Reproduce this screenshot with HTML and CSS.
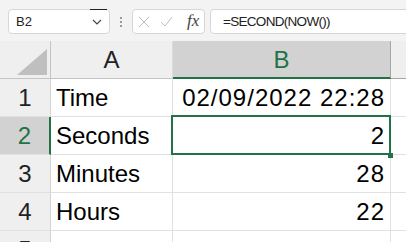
FILE: index.html
```html
<!DOCTYPE html>
<html lang="en">
<head>
  <meta charset="UTF-8" />
  <meta name="viewport" content="width=device-width, initial-scale=1.0"/>
  <title>SECOND(NOW())</title>
  <link rel="stylesheet" href="styles.css">
</head>
<body>
  <div class="toolbar">
    <div class="namebox">
      <span class="name">B2</span>
      <svg class="chevron" width="10" height="6" viewBox="0 0 10 6"><path d="M1 1 L5 5 L9 1" fill="none" stroke="#444" stroke-width="1.2"/></svg>
    </div>
    <div class="dots"><i></i><i></i><i></i></div>
    <div class="fxbtns">
      <svg class="btn" width="12" height="12" viewBox="0 0 12 12"><path d="M1 1 L11 11 M11 1 L1 11" stroke="#bdbdbd" stroke-width="1"/></svg>
      <svg class="btn" width="13" height="11" viewBox="0 0 13 11"><path d="M1 6 L5 10 L12 1" fill="none" stroke="#bdbdbd" stroke-width="1"/></svg>
      <span class="fx">fx</span>
    </div>
    <div class="formula">=SECOND(NOW())</div>
  </div>

  <div class="sheet">
    <div class="corner">
      <svg width="30" height="26" viewBox="0 0 30 26"><polygon points="0,26 30,26 30,0" fill="#bfbfbf"/></svg>
    </div>
    <div class="colhead">A</div>
    <div class="colhead sel">B</div>
    <div class="colhead rest"></div>

    <div class="rowhead">1</div>
    <div class="cell">Time</div>
    <div class="cell num">02/09/2022 22:28</div>
    <div class="cell rest"></div>

    <div class="rowhead sel">2</div>
    <div class="cell">Seconds</div>
    <div class="cell num active">2</div>
    <div class="cell rest"></div>

    <div class="rowhead">3</div>
    <div class="cell">Minutes</div>
    <div class="cell num">28</div>
    <div class="cell rest"></div>

    <div class="rowhead">4</div>
    <div class="cell">Hours</div>
    <div class="cell num">22</div>
    <div class="cell rest"></div>

    <div class="rowhead">5</div>
    <div class="cell"></div>
    <div class="cell num"></div>
    <div class="cell rest"></div>
  </div>
</body>
</html>
```

FILE: styles.css
```css
* {
  box-sizing: border-box;
}

body {
  margin: 0;
  background: #f3f3f3;
  font-family: "Liberation Sans", Arial, sans-serif;
  overflow: hidden;
  width: 406px;
  height: 242px;
}

/* formula bar */
.toolbar {
  display: flex;
  align-items: flex-start;
  height: 41px;
  padding: 9px 0 0 8px;
}

.namebox {
  position: relative;
  width: 102px;
  height: 25px;
  background: #fff;
  border: 1px solid #d6d6d6;
  border-radius: 4px;
  display: flex;
  align-items: center;
  justify-content: space-between;
  padding: 0 7px 0 7px;
}

.namebox::before {
  content: "";
  position: absolute;
  top: -1px;
  left: 81px;
  width: 17px;
  height: 1px;
  background: #222;
}

.name {
  font-size: 13px;
  color: #222;
}

.chevron {
  margin-top: 1px;
}

.dots {
  width: 22px;
  height: 25px;
  display: flex;
  flex-direction: column;
  align-items: center;
  justify-content: center;
  gap: 2px;
}

.dots i {
  width: 2px;
  height: 2px;
  background: #9a9a9a;
}

.fxbtns {
  width: 73px;
  height: 25px;
  background: #fff;
  border: 1px solid #d6d6d6;
  border-radius: 4px;
  display: flex;
  align-items: center;
  padding-left: 5px;
  gap: 10px;
}

.fx {
  font-family: "Liberation Serif", "Times New Roman", serif;
  font-style: italic;
  font-size: 17px;
  color: #444;
  margin-left: 4px;
  margin-top: -2px;
}

.formula {
  flex: 1;
  margin-left: 5px;
  margin-right: -10px;
  height: 25px;
  background: #fff;
  border: 1px solid #d6d6d6;
  border-radius: 4px;
  padding-left: 12px;
  font-size: 13.5px;
  letter-spacing: -0.7px;
  line-height: 23px;
  color: #222;
}

/* sheet grid */
.sheet {
  display: grid;
  grid-template-columns: 51px 122px 218px 1fr;
  grid-template-rows: 38px repeat(5, 38px);
  font-size: 24px;
}

.corner {
  background: #efefef;
  border-right: 1px solid #c4c4c4;
  border-bottom: 1px solid #c4c4c4;
  display: flex;
  align-items: flex-end;
  justify-content: flex-end;
  padding: 0 3px 3px 0;
}

.colhead {
  background: #efefef;
  border-right: 1px solid #dcdcdc;
  border-bottom: 1px solid #c4c4c4;
  display: flex;
  align-items: flex-end;
  justify-content: center;
  padding-bottom: 4px;
  line-height: 28px;
  color: #222;
}

.colhead.sel {
  background: #d2d2d2;
  color: #217346;
  border-right: 1px solid #a6a6a6;
  border-bottom: 2px solid #217346;
  padding-bottom: 3px;
}

.colhead.rest {
  border-right: none;
  border-bottom-color: #a6a6a6;
}

.rowhead {
  background: #efefef;
  border-right: 1px solid #d4d4d4;
  border-bottom: 1px solid #e1e1e1;
  display: flex;
  align-items: flex-end;
  justify-content: center;
  padding-bottom: 4px;
  line-height: 28px;
  color: #222;
}

.rowhead.sel {
  background: #d2d2d2;
  color: #217346;
  border-right: 2px solid #217346;
}

.cell {
  background: #fff;
  border-right: 1px solid #e1e1e1;
  border-bottom: 1px solid #e1e1e1;
  display: flex;
  align-items: flex-end;
  padding: 0 6px 4px 5px;
  line-height: 28px;
  color: #000;
  white-space: nowrap;
}

.cell.num {
  justify-content: flex-end;
  letter-spacing: 1px;
  padding-right: 5px;
}

.cell.rest {
  border-right: none;
}

.cell.active {
  position: relative;
}

.cell.active::before {
  content: "";
  position: absolute;
  top: -2px;
  left: -2px;
  right: -1px;
  bottom: -1px;
  border: 2px solid #217346;
}

.cell.active::after {
  content: "";
  position: absolute;
  right: -3px;
  bottom: -4px;
  width: 5px;
  height: 5px;
  background: #217346;
}
```
